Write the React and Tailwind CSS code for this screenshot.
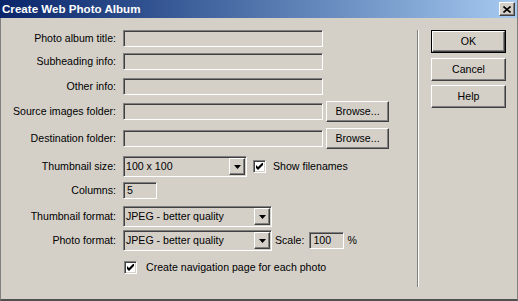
import React from "react";

const font = { fontFamily: '"Liberation Sans", Arial, sans-serif' };

const sunken =
  "border border-t-[#808080] border-l-[#808080] border-b-white border-r-white shadow-[inset_1px_1px_#404040,inset_-1px_-1px_#d4d0c8] bg-[#d4d0c8]";
const raised =
  "border border-t-white border-l-white border-b-[#404040] border-r-[#404040] shadow-[inset_-1px_-1px_#808080] bg-[#d4d0c8]";

function Label({ children }) {
  return (
    <div className="w-[116px] shrink-0 pr-[1px] text-right text-[10.6px] leading-none text-black">
      {children}
    </div>
  );
}

function TextBox({ w = "w-[200px]", value = "" }) {
  return (
    <div className={`${sunken} ${w} h-[17px] pl-[3px] flex items-center text-[10.6px] text-black`}>
      {value}
    </div>
  );
}

function Arrow() {
  return (
    <svg width="7" height="4" viewBox="0 0 7 4">
      <path d="M0 0h7L3.5 4z" fill="#000" />
    </svg>
  );
}

function Select({ w, value }) {
  return (
    <div className={`${sunken} ${w} h-[21px] flex items-center justify-between pl-[2px] pr-[1px] text-[10.6px] text-black`}>
      <span>{value}</span>
      <div className={`${raised} w-[16px] h-[17px] flex items-center justify-center`}>
        <Arrow />
      </div>
    </div>
  );
}

function Check() {
  return (
    <div className={`${sunken} !bg-white w-[13px] h-[13px] flex items-center justify-center`}>
      <svg width="7" height="7" viewBox="0 0 7 7">
        <path d="M0 2v3l2 2 5-5V-1L2 4z" fill="#000" />
      </svg>
    </div>
  );
}

function Button({ children, h = "h-[21px]", w = "w-[63px]", def = false }) {
  const inner = (
    <div className={`${raised} ${def ? "w-full h-full" : `${w} ${h}`} flex items-center justify-center text-[10.6px] text-black`}>
      {children}
    </div>
  );
  if (!def) return inner;
  return <div className={`${w} ${h} border border-black`}>{inner}</div>;
}

function Row({ children, className = "" }) {
  return <div className={`flex items-center ${className}`}>{children}</div>;
}

export default function App() {
  return (
    <div className="w-[518px] h-[301px] flex flex-col bg-[#d4d0c8] select-none" style={font}>
      <div className="h-[18px] flex items-center justify-between bg-gradient-to-r from-[#0a246a] to-[#a6caf0] border-r border-[#808080] pl-[2px] pr-[2px]">
        <span className="text-white font-bold text-[11.6px]">Create Web Photo Album</span>
        <div className={`${raised} w-[16px] h-[14px] flex items-center justify-center`}>
          <svg width="8" height="7" viewBox="0 0 8 7">
            <path d="M0.5 0.5l7 6M7.5 0.5l-7 6" stroke="#000" strokeWidth="1.6" />
          </svg>
        </div>
      </div>

      <div className="flex-1 flex border-l border-r border-[#808080] border-b-2 border-b-[#505050]">
        <div className="w-[416px] pt-[12px] flex flex-col">
          <Row className="h-[17px]">
            <Label>Photo album title:</Label>
            <div className="ml-[6px]"><TextBox /></div>
          </Row>
          <Row className="h-[17px] mt-[6px]">
            <Label>Subheading info:</Label>
            <div className="ml-[6px]"><TextBox /></div>
          </Row>
          <Row className="h-[17px] mt-[8px]">
            <Label>Other info:</Label>
            <div className="ml-[6px]"><TextBox /></div>
          </Row>
          <Row className="h-[21px] mt-[6px]">
            <Label>Source images folder:</Label>
            <div className="ml-[6px]"><TextBox /></div>
            <div className="ml-[3px]"><Button>Browse...</Button></div>
          </Row>
          <Row className="h-[21px] mt-[6px]">
            <Label>Destination folder:</Label>
            <div className="ml-[6px]"><TextBox /></div>
            <div className="ml-[3px]"><Button>Browse...</Button></div>
          </Row>
          <Row className="h-[21px] mt-[7px]">
            <Label>Thumbnail size:</Label>
            <div className="ml-[6px]"><Select w="w-[124px]" value="100 x 100" /></div>
            <div className="ml-[6px]"><Check /></div>
            <span className="ml-[7px] text-[10.6px] text-black">Show filenames</span>
          </Row>
          <Row className="h-[17px] mt-[5px]">
            <Label>Columns:</Label>
            <div className="ml-[6px]"><TextBox w="w-[34px]" value="5" /></div>
          </Row>
          <Row className="h-[21px] mt-[7px]">
            <Label>Thumbnail format:</Label>
            <div className="ml-[6px]"><Select w="w-[149px]" value="JPEG - better quality" /></div>
          </Row>
          <Row className="h-[21px] mt-[3px]">
            <Label>Photo format:</Label>
            <div className="ml-[6px]"><Select w="w-[149px]" value="JPEG - better quality" /></div>
            <span className="ml-[3px] text-[10.6px] text-black">Scale:</span>
            <div className="ml-[5px]"><TextBox w="w-[35px]" value="100" /></div>
            <span className="ml-[3px] text-[10.6px] text-black">%</span>
          </Row>
          <Row className="h-[13px] mt-[10px]">
            <div className="w-[123px] shrink-0" />
            <Check />
            <span className="ml-[9px] text-[10.6px] text-black">Create navigation page for each photo</span>
          </Row>
        </div>

        <div className="mt-[12px] h-[257px] w-[2px] border-l border-[#808080] border-r border-r-white" />

        <div className="pl-[12px] pt-[12px] flex flex-col">
          <Button def w="w-[75px]" h="h-[23px]">OK</Button>
          <div className="mt-[5px]"><Button w="w-[75px]" h="h-[23px]">Cancel</Button></div>
          <div className="mt-[4px]"><Button w="w-[75px]" h="h-[23px]">Help</Button></div>
        </div>
      </div>
    </div>
  );
}
